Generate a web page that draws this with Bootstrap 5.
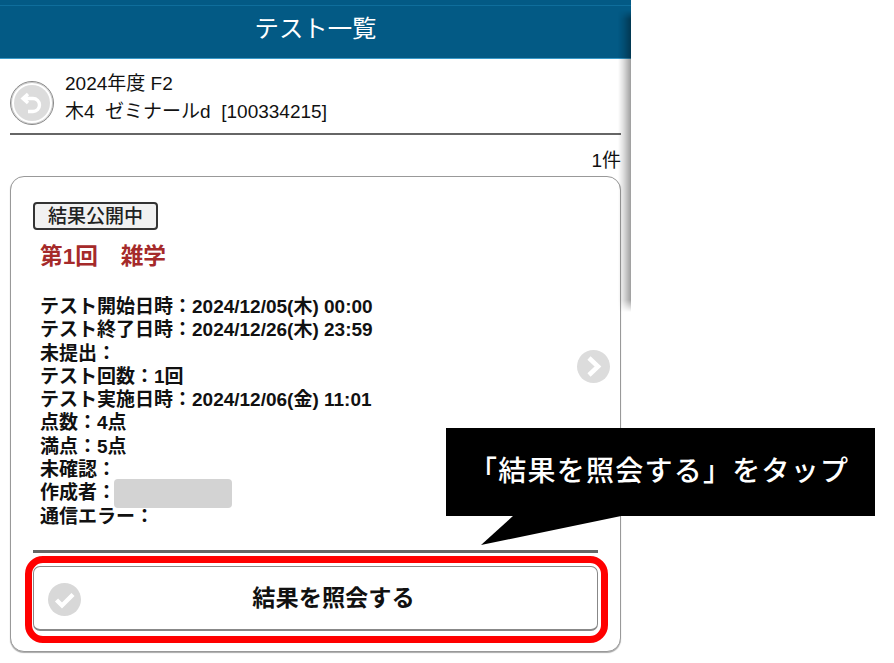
<!DOCTYPE html>
<html lang="ja"><head><meta charset="utf-8"><title>テスト一覧</title>
<link href="https://cdn.jsdelivr.net/npm/bootstrap@5.3.0/dist/css/bootstrap.min.css" rel="stylesheet">
<style>
html,body{height:663px;overflow:hidden;background:#fff}
body{font-family:"Liberation Sans","Noto Sans CJK JP",sans-serif;color:#111;position:relative}
.phone{width:631px;height:663px;position:relative}
.topbar{height:59px;background:#035a85;border-top:5px solid #035a85;box-shadow:inset 0 -1px 0 #3a9ac9,inset 0 1px 0 #0f6e9c;color:#fff;font-size:24.4px;line-height:47px;text-align:center}
.sideshade{position:absolute;left:618px;top:10px;width:13px;height:302px;background:linear-gradient(90deg,rgba(0,0,0,0),rgba(0,0,0,.12) 40%,rgba(0,0,0,.38));-webkit-mask-image:linear-gradient(180deg,transparent,#000 3%,#000 96%,transparent);mask-image:linear-gradient(180deg,transparent,#000 3%,#000 96%,transparent)}
.headrow{margin:0 10px;height:76px;border-bottom:2px solid #666;padding-top:11px}
.backbtn{width:44px;height:44px;border-radius:50%;border:1px solid #888;background:#fff;margin-top:11px;flex:none;display:flex;align-items:center;justify-content:center;box-shadow:0 0 0 1px #ccc inset}
.coursetxt{font-size:19px;line-height:28px;margin-left:11px}
.countline{margin:0 10px;height:41px;text-align:right;font-size:19px;line-height:52px}
.testcard{margin:0 10px;height:476px;border:1px solid #999;border-radius:14px;box-shadow:0 1px 1px #aaa;padding:25px 22px 0;background:#fff;position:relative}
.statustag{display:inline-block;font-size:19px;font-weight:500;line-height:25px;height:28px;width:125px;text-align:center;background:#f1f1f1;border:2px solid #333;border-radius:4px;color:#222}
.testname{color:#a52a2a;font-size:22.7px;font-weight:700;line-height:28px;margin:12px 0 0 7px;white-space:pre}
.details{margin:25px 0 0 7px;font-size:19px;font-weight:700;line-height:23.3px;color:#111}
.blurbox{display:inline-block;width:118px;height:29px;background:#d3d3d3;border-radius:4px;vertical-align:-3px;margin:-6px 0 -6px -2px}
.chev{position:absolute;left:577px;top:350px;width:33px;height:33px}
.rule{position:absolute;left:22px;right:22px;top:373px;height:3px;background:#666}
.resultbtn{position:absolute;left:22px;right:22px;top:389px;height:65px;border:1px solid #888;border-bottom:2px solid #888;border-radius:7px;background:#fff;font-size:23.2px;font-weight:700;color:#111;display:flex;align-items:center;justify-content:center;padding:0 0 0 36px}
.checkico{position:absolute;left:14px;top:16px;width:33px;height:33px}
.redframe{position:absolute;left:25px;top:556px;width:583px;height:87px;border:7px solid #f00;border-radius:18px;pointer-events:none}
.callout{position:absolute;left:446px;top:428px;width:429px;height:88px;background:#000;color:#fff;font-size:28px;font-weight:500;line-height:87px;padding-left:23px;white-space:nowrap;letter-spacing:1.25px}
.tail{position:absolute;left:480px;top:515px;width:146px;height:31px}
</style></head><body>
<div class="phone">
  <div class="topbar">テスト一覧</div>
  <div class="headrow d-flex">
    <div class="backbtn"><svg width="36" height="36" viewBox="0 0 36 36"><circle cx="18" cy="18" r="18" fill="#dcdcdc"/><path d="M14 9 9 13.5l5 4.5M10 13.5h9a6.5 6.5 0 0 1 0 13h-5" fill="none" stroke="#fff" stroke-width="3.4"/></svg></div>
    <div class="coursetxt">2024年度 F2<br>木4&nbsp; ゼミナールd&nbsp; [100334215]</div>
  </div>
  <div class="countline">1件</div>
  <div class="testcard">
    <span class="statustag">結果公開中</span>
    <div class="testname">第1回　雑学</div>
    <div class="details">テスト開始日時：2024/12/05(木) 00:00<br>テスト終了日時：2024/12/26(木) 23:59<br>未提出：<br>テスト回数：1回<br>テスト実施日時：2024/12/06(金) 11:01<br>点数：4点<br>満点：5点<br>未確認：<br>作成者：<span class="blurbox"></span><br>通信エラー：</div>
    <div class="rule"></div>
    <div class="resultbtn">
      <svg class="checkico" viewBox="0 0 33 33"><circle cx="16.5" cy="16.5" r="16.5" fill="#d8d8d8"/><path d="M8.5 17l5.5 5.5L25 11.5" fill="none" stroke="#fff" stroke-width="4.4"/></svg>
      結果を照会する
    </div>
  </div>
  <svg class="chev" viewBox="0 0 33 33"><circle cx="16.5" cy="16.5" r="16.5" fill="#dcdcdc"/><path d="M12 8l9 8.5-9 8.5" fill="none" stroke="#fff" stroke-width="4.6"/></svg>
  <div class="sideshade"></div>
</div>
<div class="redframe"></div>
<svg class="tail" viewBox="0 0 146 31"><polygon points="34,0 146,0 1,30" fill="#000"/></svg>
<div class="callout">「結果を照会する」をタップ</div>
</body></html>
